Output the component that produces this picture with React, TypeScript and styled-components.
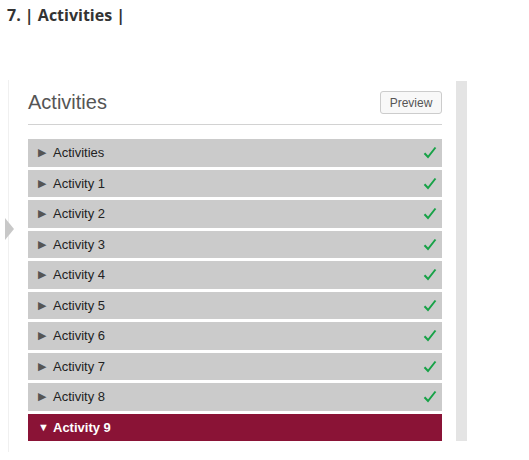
import styled, { createGlobalStyle } from 'styled-components';

const GlobalStyle = createGlobalStyle`
  body {
    margin: 0;
    background: #fff;
    font-family: "Liberation Sans", Arial, sans-serif;
  }
`;

const Page = styled.div`
  width: 529px;
  height: 460px;
  position: relative;
`;

const Heading = styled.h1`
  margin: 0;
  padding: 4px 0 0 7px;
  height: 76px;
  box-sizing: border-box;
  font-family: "Open Sans", sans-serif;
  font-weight: 700;
  font-size: 16px;
  line-height: 22px;
  color: #333;
`;

const Stage = styled.div`
  display: flex;
  margin-left: 8px;
  padding-top: 4px;
`;

const Panel = styled.div`
  width: 414px;
  height: 361px;
  border-left: 1px solid #f0f0f0;
  padding: 11px 0 0 19px;
`;

const PanelHeader = styled.div`
  display: flex;
  justify-content: space-between;
  align-items: center;
  height: 23px;
  padding-bottom: 10px;
  border-bottom: 1px solid #d2d2d2;
  margin-bottom: 14px;
`;

const Title = styled.h2`
  margin: 0;
  font-weight: 400;
  font-size: 20px;
  color: #555;
`;

const PreviewButton = styled.button`
  width: 62px;
  height: 23px;
  border: 1px solid #ccc;
  border-radius: 3px;
  background: #f8f8f8;
  color: #555;
  font-family: "Liberation Sans", Arial, sans-serif;
  font-size: 12px;
  padding: 0;
`;

const List = styled.div`
  display: flex;
  flex-direction: column;
  gap: 3px;
`;

const Row = styled.div<{ $active?: boolean }>`
  display: flex;
  align-items: center;
  height: 27.5px;
  padding: 0 5px 0 10px;
  background: ${p => (p.$active ? '#8a1336' : '#cbcbcb')};
  color: ${p => (p.$active ? '#fff' : '#222')};
  font-size: 13px;
  font-weight: ${p => (p.$active ? 700 : 400)};
`;

const Caret = styled.span<{ $active?: boolean }>`
  width: 15px;
  font-size: 11px;
  color: ${p => (p.$active ? '#fff' : '#555')};
`;

const Label = styled.span`
  flex: 1;
`;

const Scrollbar = styled.div`
  width: 11px;
  height: 360px;
  margin-left: 14px;
  margin-top: 1px;
  background: #e4e4e4;
`;

const NavArrow = styled.div`
  position: absolute;
  left: 5px;
  top: 218px;
  width: 0;
  height: 0;
  border-top: 11px solid transparent;
  border-bottom: 11px solid transparent;
  border-left: 9px solid #c8c8c8;
`;

function Check() {
  return (
    <svg width="14" height="13" viewBox="0 0 14 13">
      <path d="M1.5 7.2 L5 11 L12.5 1.5" fill="none" stroke="#17a247" strokeWidth="2" />
    </svg>
  );
}

const items = ['Activities', 'Activity 1', 'Activity 2', 'Activity 3', 'Activity 4', 'Activity 5', 'Activity 6', 'Activity 7', 'Activity 8'];

export default function App() {
  return (
    <Page>
      <GlobalStyle />
      <Heading>7. | Activities |</Heading>
      <Stage>
        <Panel>
          <PanelHeader>
            <Title>Activities</Title>
            <PreviewButton>Preview</PreviewButton>
          </PanelHeader>
          <List>
            {items.map(item => (
              <Row key={item}>
                <Caret>▶</Caret>
                <Label>{item}</Label>
                <Check />
              </Row>
            ))}
            <Row $active>
              <Caret $active>▼</Caret>
              <Label>Activity 9</Label>
            </Row>
          </List>
        </Panel>
        <Scrollbar />
      </Stage>
      <NavArrow />
    </Page>
  );
}
